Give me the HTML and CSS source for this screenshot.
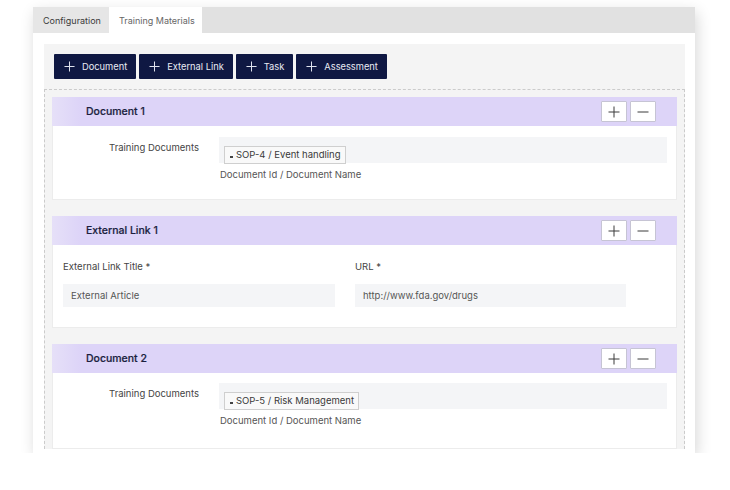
FILE: index.html
```html
<!DOCTYPE html>
<html>
<head>
<meta charset="utf-8">
<link rel="stylesheet" href="styles.css">
</head>
<body>
<div class="window">
  <div class="tabs">
    <div class="tab tab-config">Configuration</div>
    <div class="tab tab-active">Training Materials</div>
  </div>
  <div class="content">
    <div class="stage">
      <div class="toolbar">
        <button class="add-btn"><svg class="plus-ic" viewBox="0 0 12 12"><path d="M6 0.5V11.5M0.5 6H11.5"/></svg>Document</button>
        <button class="add-btn"><svg class="plus-ic" viewBox="0 0 12 12"><path d="M6 0.5V11.5M0.5 6H11.5"/></svg>External Link</button>
        <button class="add-btn"><svg class="plus-ic" viewBox="0 0 12 12"><path d="M6 0.5V11.5M0.5 6H11.5"/></svg>Task</button>
        <button class="add-btn"><svg class="plus-ic" viewBox="0 0 12 12"><path d="M6 0.5V11.5M0.5 6H11.5"/></svg>Assessment</button>
      </div>
      <div class="list">
        <div class="card">
          <div class="card-head">
            <span class="card-title">Document 1</span>
            <span class="head-btn"><svg viewBox="0 0 12 12"><path d="M6 0.5V11.5M0.5 6H11.5"/></svg></span>
            <span class="head-btn"><svg viewBox="0 0 12 12"><path d="M0.5 6H11.5"/></svg></span>
          </div>
          <div class="card-body doc-body">
            <div class="doc-label">Training Documents</div>
            <div class="doc-field">
              <div class="doc-input"><span class="tag"><span class="tag-x"></span>SOP-4 / Event handling</span></div>
              <div class="helper">Document Id / Document Name</div>
            </div>
          </div>
        </div>
        <div class="card">
          <div class="card-head">
            <span class="card-title">External Link 1</span>
            <span class="head-btn"><svg viewBox="0 0 12 12"><path d="M6 0.5V11.5M0.5 6H11.5"/></svg></span>
            <span class="head-btn"><svg viewBox="0 0 12 12"><path d="M0.5 6H11.5"/></svg></span>
          </div>
          <div class="card-body link-body">
            <div class="link-col">
              <div class="link-label">External Link Title *</div>
              <div class="link-input">External Article</div>
            </div>
            <div class="link-col">
              <div class="link-label">URL *</div>
              <div class="link-input">http://www.fda.gov/drugs</div>
            </div>
          </div>
        </div>
        <div class="card">
          <div class="card-head">
            <span class="card-title">Document 2</span>
            <span class="head-btn"><svg viewBox="0 0 12 12"><path d="M6 0.5V11.5M0.5 6H11.5"/></svg></span>
            <span class="head-btn"><svg viewBox="0 0 12 12"><path d="M0.5 6H11.5"/></svg></span>
          </div>
          <div class="card-body doc-body doc-body-2">
            <div class="doc-label">Training Documents</div>
            <div class="doc-field">
              <div class="doc-input"><span class="tag"><span class="tag-x"></span>SOP-5 / Risk Management</span></div>
              <div class="helper">Document Id / Document Name</div>
            </div>
          </div>
        </div>
      </div>
    </div>
  </div>
</div>
</body>
</html>
```
FILE: styles.css
```css
* { box-sizing: border-box; }
html, body { margin: 0; padding: 0; background: #ffffff; }
body {
  font-family: Inter, "Noto Sans", "Liberation Sans", sans-serif;
  color: #333;
}
.window {
  margin: 7px 0 0 33px;
  width: 662px;
  height: 446px;
  overflow: hidden;
  background: #ffffff;
  box-shadow: 2px 5px 14px rgba(0,0,0,0.16);
}
.tabs {
  display: flex;
  height: 26px;
  background: #e1e1e1;
}
.tab {
  font-size: 9px;
  line-height: 27px;
  padding-left: 10px;
  color: #3a3a3a;
}
.tab-config { width: 76px; background: #e6e6e6; }
.tab-active { width: 93px; background: #ffffff; color: #666; }
.content {
  padding: 11px 10px 0 11px;
}
.stage {
  background: #f4f4f4;
  padding-top: 10px;
}
.toolbar {
  display: flex;
  gap: 3px;
  padding: 0 10px;
  margin-bottom: 10px;
}
.add-btn {
  display: flex;
  align-items: center;
  height: 25px;
  padding: 0 9px 0 10px;
  border: none;
  border-radius: 1px;
  background: #0f1843;
  color: #e9ebf3;
  font-family: inherit;
  font-size: 9.3px;
}
.plus-ic {
  width: 11px;
  height: 11px;
  margin-right: 7px;
  fill: none;
  stroke: #dfe2ee;
  stroke-width: 1.1;
}
.list {
  border: 1px dashed #cbcbcb;
  border-bottom: none;
  padding: 7px 7px 0 7px;
}
.card + .card { margin-top: 16px; }
.card-head {
  display: flex;
  align-items: center;
  height: 29px;
  padding: 0 21px 0 34px;
  background: linear-gradient(90deg, #e6e0f8 0px, #ddd4f8 28px, #ddd4f8 100%);
}
.card-title {
  flex: 1;
  font-size: 10.5px;
  font-weight: 500;
  color: #1b1f3f;
  -webkit-text-stroke: 0.2px #1b1f3f;
}
.head-btn {
  display: flex;
  align-items: center;
  justify-content: center;
  width: 26px;
  height: 21px;
  margin-left: 3px;
  background: #ffffff;
  border: 1px solid #c6c4d4;
  border-radius: 1px;
}
.head-btn svg {
  width: 12px;
  height: 12px;
  fill: none;
  stroke: #3a3a3a;
  stroke-width: 1;
}
.card-body {
  background: #ffffff;
  border: 1px solid #ececec;
  border-top: none;
}
.doc-body {
  display: flex;
  height: 74px;
  padding-top: 11px;
}
.doc-body-2 { padding-top: 10px; height: 76px; }
.doc-label {
  width: 166px;
  padding-right: 20px;
  text-align: right;
  font-size: 9.5px;
  line-height: 14px;
  margin-top: 4px;
  color: #444;
}
.doc-field { width: 448px; }
.doc-input {
  height: 26px;
  background: #f4f5f7;
  padding: 5px 0 0 5px;
}
.tag {
  display: inline-flex;
  align-items: center;
  height: 18px;
  padding: 0 4px 0 4px;
  border: 1px solid #cfcfcf;
  background: #f9f9f9;
  font-size: 9.5px;
  color: #3a3a3a;
}
.tag-x {
  display: inline-block;
  width: 3px;
  height: 2px;
  margin: 5px 3px 0 1px;
  background: #444;
}
.helper {
  margin-top: 5px;
  padding-left: 1px;
  font-size: 9.5px;
  line-height: 14px;
  color: #555;
}
.link-body {
  display: flex;
  gap: 20px;
  height: 83px;
  padding: 15px 10px 0 10px;
}
.link-col { width: 272px; }
.link-col + .link-col { width: 271px; }
.link-label {
  font-size: 9.5px;
  line-height: 14px;
  color: #444;
  margin-bottom: 10px;
}
.link-input {
  height: 23px;
  line-height: 23px;
  padding-left: 8px;
  background: #f4f5f7;
  font-size: 9.5px;
  color: #555;
}
```
